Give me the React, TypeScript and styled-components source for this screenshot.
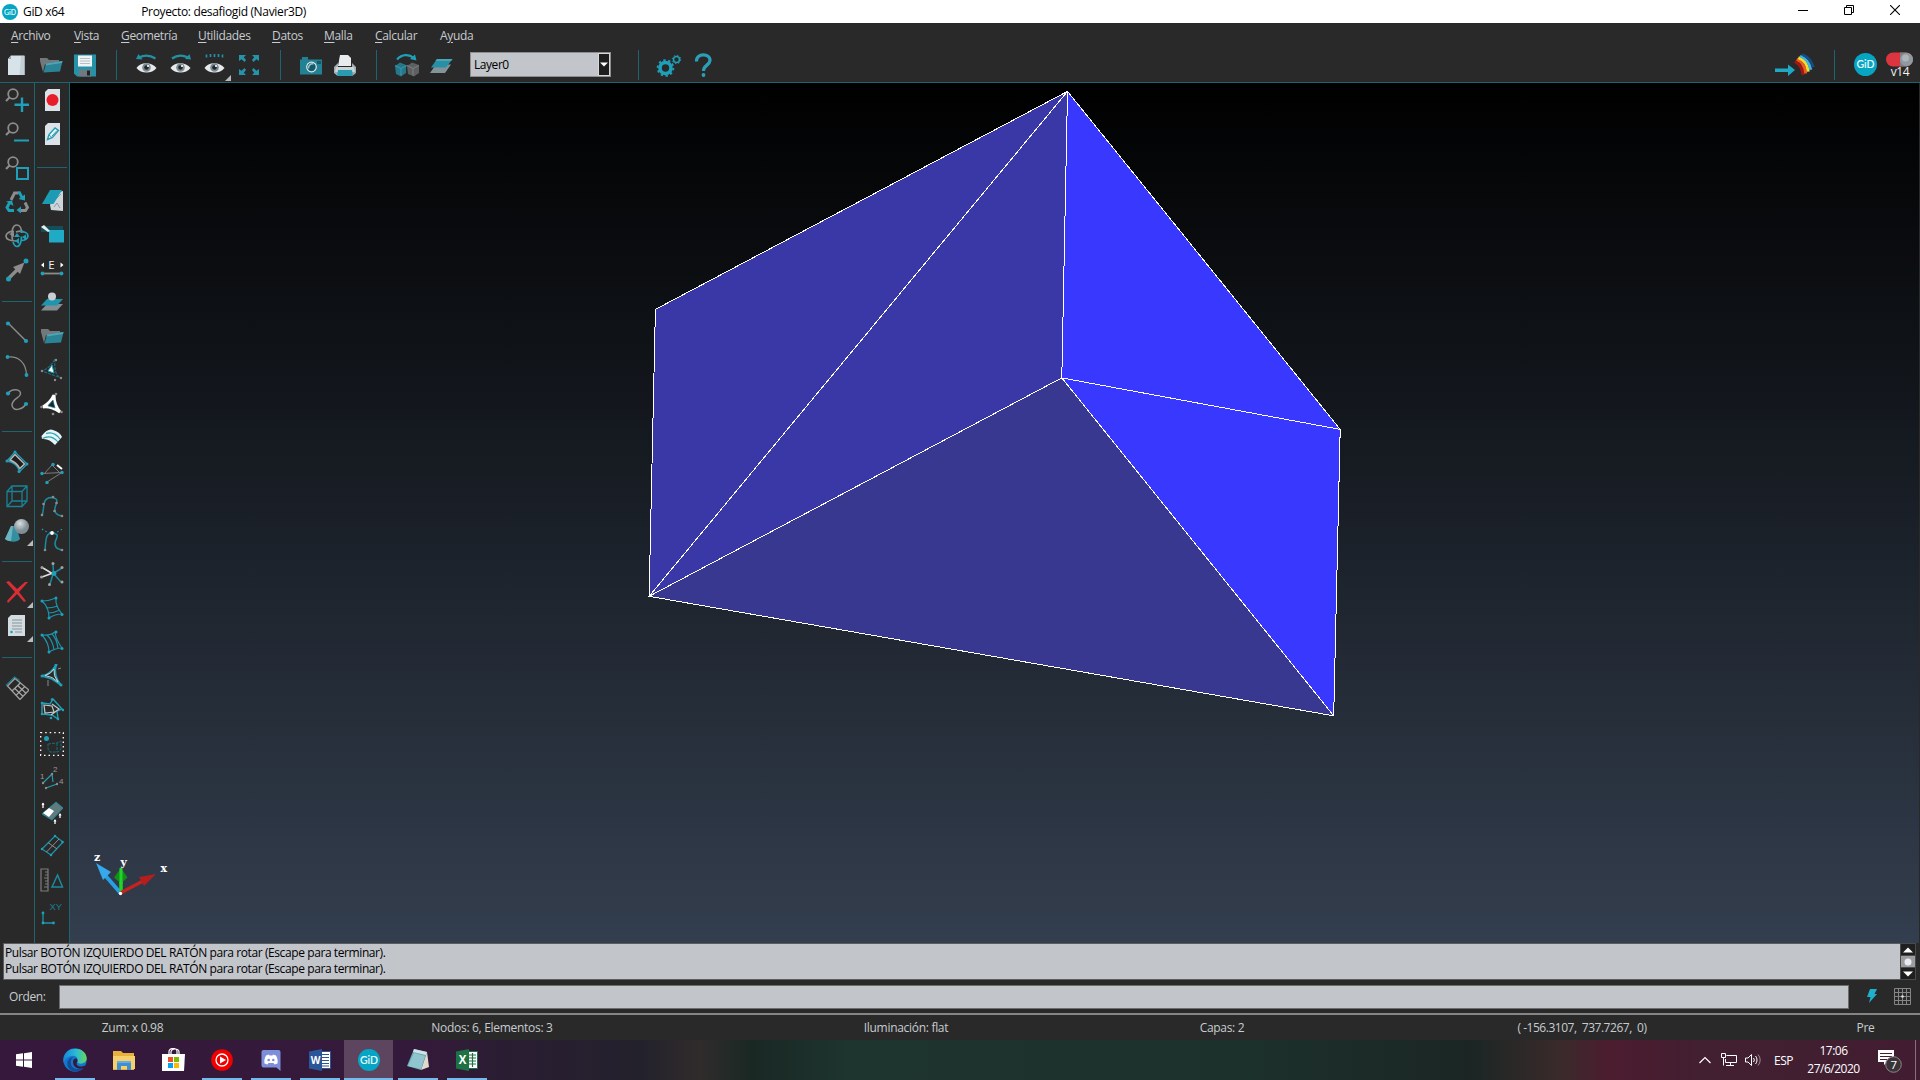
import React from 'react';
import styled, { createGlobalStyle } from 'styled-components';

const TEAL = '#1fa0ba';
const LINE = '#1d6470';
const GREY = '#8c8c8c';

const GlobalStyle = createGlobalStyle`
  html, body { margin: 0; padding: 0; background: #292929; overflow: hidden; }
  body { font-family: 'Open Sans', 'Noto Sans', sans-serif; font-size: 12px; }
  * { box-sizing: border-box; }
  svg { display: block; flex: none; }
`;

const Shell = styled.div`
  width: 1920px;
  height: 1080px;
  display: flex;
  flex-direction: column;
  background: #292929;
  color: #c8ccd0;
`;

/* ---------- title bar ---------- */
const TitleBar = styled.header`
  height: 23px;
  flex: none;
  display: flex;
  align-items: center;
  background: #fff;
  color: #000;
  padding: 0 2px;
`;
const Title = styled.span<{ $left: number }>`
  margin-left: ${(p) => p.$left}px;
  letter-spacing: -0.34px;
  white-space: pre;
`;
const WindowButtons = styled.div`
  margin-left: auto;
  display: flex;
  height: 100%;
  padding-bottom: 3px;
`;
const WindowButton = styled.div`
  width: 46px;
  display: flex;
  align-items: center;
  justify-content: center;
`;

/* ---------- menu ---------- */
const MenuBar = styled.nav`
  height: 24px;
  flex: none;
  display: flex;
  align-items: center;
  padding: 1px 0 0 11px;
`;
const MenuItem = styled.span<{ $w: number }>`
  width: ${(p) => p.$w}px;
  letter-spacing: -0.34px;
  u { text-underline-offset: 2px; }
`;

/* ---------- toolbar ---------- */
const Toolbar = styled.div`
  height: 36px;
  flex: none;
  display: flex;
  align-items: center;
  border-bottom: 1px solid ${LINE};
  padding-right: 2px;
`;
const Slot = styled.div<{ $w?: number; $corner?: boolean }>`
  position: relative;
  width: ${(p) => p.$w ?? 34}px;
  height: 34px;
  flex: none;
  display: flex;
  align-items: center;
  justify-content: center;
  &::after {
    content: '';
    display: ${(p) => (p.$corner ? 'block' : 'none')};
    position: absolute;
    right: 1px;
    bottom: 1px;
    border-style: solid;
    border-width: 0 0 6px 6px;
    border-color: transparent transparent #b9bcbf transparent;
  }
`;
const VRule = styled.div<{ $before?: number }>`
  width: 1px;
  height: 30px;
  background: ${LINE};
  margin: 0 13px 0 ${(p) => p.$before ?? 14}px;
`;
const Combo = styled.div`
  width: 141px;
  height: 25px;
  margin-left: 12px;
  display: flex;
  border: 1px solid #8e8e8e;
  background: #c2c5ca;
  color: #000;
`;
const ComboText = styled.div`
  flex: 1;
  padding-left: 3px;
  line-height: 24px;
  letter-spacing: -0.45px;
`;
const ComboArrow = styled.div`
  width: 12px;
  background: #1e1e1e;
  border: 1px solid #d8d8d8;
  display: flex;
  align-items: center;
  justify-content: center;
`;
const Spacer = styled.div`flex: 1;`;
const ToggleStack = styled.div`
  display: flex;
  flex-direction: column;
  align-items: center;
  width: 36px;
  color: #f2f2f2;
  line-height: 9px;
  letter-spacing: -0.4px;
  padding-bottom: 1px;
`;

/* ---------- work area ---------- */
const Work = styled.main`
  height: 860px;
  flex: none;
  display: flex;
`;
const Rail = styled.aside`
  width: 35px;
  flex: none;
  display: flex;
  flex-direction: column;
  border-right: 1px solid ${LINE};
`;
const HRule = styled.div<{ $h?: number }>`
  height: ${(p) => p.$h ?? 28}px;
  flex: none;
  display: flex;
  align-items: center;
  justify-content: center;
  &::before {
    content: '';
    width: 30px;
    height: 1px;
    background: ${LINE};
  }
`;
const Viewport = styled.section`
  width: 1849px;
  background: linear-gradient(#000, #333e4e);
`;

/* ---------- messages and command ---------- */
const MessageRow = styled.div`
  height: 37px;
  flex: none;
  display: flex;
  padding: 0 4px 0 3px;
`;
const Messages = styled.div`
  width: 1897px;
  background: #c2c5ca;
  border: 1px solid #5c5c5c;
  border-right: 0;
  color: #000;
  padding: 1px;
  line-height: 16px;
  letter-spacing: -0.405px;
`;
const ScrollBar = styled.div`
  width: 16px;
  display: flex;
  flex-direction: column;
  background: #4a4a4a;
  padding: 1px;
  gap: 1px;
`;
const ScrollPart = styled.div<{ $thumb?: boolean }>`
  flex: 1;
  display: flex;
  align-items: center;
  justify-content: center;
  background: ${(p) => (p.$thumb ? '#9b9da1' : '#1f1f1f')};
`;
const CommandRow = styled.div`
  height: 33px;
  flex: none;
  display: flex;
  align-items: center;
  padding: 0 9px;
  letter-spacing: -0.4px;
`;
const CommandInput = styled.div`
  width: 1790px;
  height: 24px;
  border: 1px solid #6d6d6d;
  background: #c2c5ca;
`;
const CommandLabel = styled.span`width: 50px;`;
const CommandIcons = styled.div`
  flex: 1;
  display: flex;
  justify-content: space-between;
  padding-left: 17px;
`;
const StatusBar = styled.div`
  height: 27px;
  flex: none;
  display: grid;
  grid-template-columns: 265px 454px 374px 258px 462px 105px;
  align-items: center;
  justify-items: center;
  border-top: 2px solid #858585;
  white-space: pre;
`;
const Status = styled.span<{ $ls?: number }>`
  letter-spacing: ${(p) => p.$ls ?? -0.3}px;
`;

/* ---------- taskbar ---------- */
const Taskbar = styled.footer`
  height: 40px;
  flex: none;
  display: flex;
  color: #fff;
  background: linear-gradient(90deg, #35183c 0, #341a3a 430px, #2a1d33 500px, #23212c 640px, #302c2c 700px, #1a2824 750px,
    #1e342e 850px, #1c302c 1250px, #1b2624 1470px, #3a2a2b 1560px, #4c1c2f 1610px, #421f31 1700px, #421d31 1920px);
`;
const TaskCell = styled.div<{ $active?: boolean; $w?: number }>`
  width: ${(p) => p.$w ?? 49}px;
  display: grid;
  grid-template-rows: 38px 2px;
  align-items: center;
  justify-items: center;
  background: ${(p) => (p.$active ? '#5d4560' : 'transparent')};
  > svg { margin-top: 2px; }
`;
const TaskUnder = styled.div<{ $active?: boolean }>`
  width: ${(p) => (p.$active ? 49 : 40)}px;
  height: 2px;
  background: #76b9ed;
`;
const TaskGap = styled.div`width: 2px;`;
const Tray = styled.div`
  margin-left: auto;
  display: flex;
  align-items: center;
`;
const TrayItem = styled.div<{ $w: number }>`
  width: ${(p) => p.$w}px;
  display: flex;
  justify-content: center;
  letter-spacing: -0.5px;
`;
const Clock = styled.div`
  width: 63px;
  text-align: center;
  line-height: 18px;
  letter-spacing: -0.5px;
`;
const DesktopEdge = styled.div`
  width: 5px;
  height: 40px;
  border-left: 1px solid #85707c;
`;

/* ---------- icons ---------- */
type IconProps = { children: React.ReactNode; w?: number; h?: number };
const Icon = ({ children, w = 24, h = 24 }: IconProps) => (
  <svg width={w} height={h} viewBox={`0 0 ${w} ${h}`} fill="none">{children}</svg>
);

const Dots = ({ at, c = TEAL, r = 1.5 }: { at: number[][]; c?: string; r?: number }) => (
  <>{at.map(([x, y]) => <circle key={`${x}-${y}`} cx={x} cy={y} r={r} fill={c} />)}</>
);

const GidLogo = ({ size, font }: { size: number; font: number }) => (
  <svg width={size} height={size} viewBox={`0 0 ${size} ${size}`}>
    <circle cx={size / 2} cy={size / 2} r={size / 2} fill="#07a5c4" />
    <text x={size / 2} y={size / 2 + font * 0.36} textAnchor="middle" fontSize={font} fontWeight="600" fill="#e8fbff" fontFamily="Lato, 'Open Sans', sans-serif">GiD</text>
  </svg>
);

const Eye = () => (
  <>
    <path d="M1.500 15C5 8.500 17 8.500 21.500 15C17 21 6 21 1.500 15Z" fill="#e6eaec" />
    <circle cx="11.500" cy="14.500" r="4.300" fill="#7d8a92" />
    <circle cx="11.500" cy="14.500" r="2.300" fill="#20282c" />
    <circle cx="13" cy="13" r="1.100" fill="#fff" />
  </>
);

const Magnifier = () => (
  <>
    <circle cx="8" cy="6" r="4.800" stroke={GREY} strokeWidth="1.800" />
    <path d="M4.500 9.500L1 13" stroke={GREY} strokeWidth="2.200" />
  </>
);

const FolderShape = () => (
  <>
    <path d="M1 5h7l2 2h10v4H6l-2 8L1 8z" fill="#74787a" />
    <path d="M7 10.500L23.500 8 21 18.500 4.500 19.500z" fill="#2a8496" />
    <path d="M7 10.500L23.500 8 23 10 6.500 12.500z" fill="#4da5b5" />
  </>
);

const NewIcon = () => (
  <Icon><path d="M6 2.500H19.500V22H3V6z" fill="#d8e2e9" /><path d="M6 2.500V6H3z" fill="#93a4ae" /><path d="M16 3h3.500v19h-5z" fill="#c3d0d8" /></Icon>
);
const SaveIcon = () => (
  <Icon>
    <path d="M1 1.500H23V23.500H4L1 20.500z" fill="#2592a8" />
    <path d="M5 2.500h14v11H5z" fill="#eef4f6" /><path d="M7 5.500h10M7 8h10M7 10.500h10" stroke="#b6c0c6" />
    <path d="M6 16.500h12v7H6z" fill="#6e7a80" /><path d="M14 17.500h3v5h-3z" fill="#222" />
  </Icon>
);
const EyeBack = () => (
  <Icon><path d="M4 4.500C9 2 15 2 20.500 5.500" stroke="#2490a4" strokeWidth="2.200" /><path d="M1 6L3.500 1 7.500 6.500z" fill="#2490a4" /><Eye /></Icon>
);
const EyeForward = () => (
  <Icon><path d="M3 5.500C8 2 14 2 19 4.500" stroke="#2490a4" strokeWidth="2.200" /><path d="M22 6.500L20.500 1 16 6z" fill="#2490a4" /><Eye /></Icon>
);
const EyeDots = () => (
  <Icon><path d="M3.500 1.500v3M7.500 1v3M11.500 1v3M15.500 1v3M19.500 1.500v3" stroke="#2490a4" strokeWidth="1.700" /><Eye /></Icon>
);
const ExpandIcon = () => (
  <Icon><g fill="#2593a9">
    <path d="M2 2h7L6.800 4.300 9 7 7.500 9 4.500 6.300 2 8z" /><path d="M22 2h-7l2.200 2.300L15 7l1.500 2 3-2.700L22 8z" />
    <path d="M2 22h7l-2.200-2.300L9 17l-1.500-2-3 2.700L2 16z" /><path d="M22 22h-7l2.200-2.300L15 17l1.500-2 3 2.700L22 16z" />
  </g></Icon>
);
const CameraIcon = () => (
  <Icon>
    <path d="M1 6.500h2V4h6v2.500h14v15H1z" fill="#238194" /><path d="M18 8h4v3h-4z" fill="#135b69" />
    <circle cx="12.500" cy="14" r="5.400" fill="#dfe7ea" /><circle cx="12.500" cy="14" r="4.200" fill="#155a69" /><path d="M9.500 15.500a4 4 0 0 1 5-4.500" stroke="#8fc8d2" strokeWidth="1.500" />
  </Icon>
);
const PrinterIcon = () => (
  <Icon>
    <path d="M7 2h8l3 3v8H5z" fill="#e8ecee" /><path d="M1 14l4-4v4h14v-4l4 4v6l-3 2.500H4L1 20z" fill="#a3adb2" />
    <path d="M3 14h18l1 5H2z" fill="#ccd4d8" /><path d="M5 17h14l1 6H4z" fill="#2a9cb2" />
  </Icon>
);
const CubesIcon = () => (
  <Icon w={26}>
    <path d="M3 6.500C8 1 15 1 20 5" stroke={TEAL} strokeWidth="2.200" /><path d="M22.500 7.500L21 1.500 16 6z" fill={TEAL} />
    <path d="M1 13l5-3.500 6 2.500v8l-5 3.500-5-2.500z" fill="#23788a" /><path d="M1 12.500l6 3 6-3M7 15.500v7" stroke="#4296a6" />
    <path d="M13 13l5-3.500 7 2.500v8l-5 3.500-6-2.500z" fill="#5c6061" /><path d="M13 12.500l6 3 6-3M19 15.500v7" stroke="#7c8082" />
  </Icon>
);
const LayersIcon = () => (
  <Icon><path d="M7 11.500h15l-6 8.500H1z" fill="#84939a" /><path d="M8 6h15.500l-6.500 8.500H2z" fill="#2790a5" /><path d="M8 6h15.500l-1.500 2H6.500z" fill="#4aa6b7" /></Icon>
);
const GearsIcon = () => (
  <Icon w={26}>
    <circle cx="9.500" cy="15" r="5.500" stroke={TEAL} strokeWidth="3.600" />
    <circle cx="9.500" cy="15" r="7.900" stroke={TEAL} strokeWidth="1.800" strokeDasharray="2.400 2.560" />
    <circle cx="20.500" cy="6.500" r="3" stroke={TEAL} strokeWidth="1.500" />
    <circle cx="20.500" cy="6.500" r="4.200" stroke={TEAL} strokeWidth="1" strokeDasharray="1.500 1.800" />
  </Icon>
);
const HelpIcon = () => (
  <Icon><path d="M5.500 8.500C5 -0.500 19.500 0 19 7.500C18.500 12.500 12.500 12 12.500 18" stroke="#2c9fb8" strokeWidth="3.200" /><circle cx="12.500" cy="22" r="1.900" fill="#2c9fb8" /></Icon>
);
const PostprocessIcon = () => (
  <Icon w={40}>
    <path d="M0 15.500h13v-4l7 5.500-7 6v-4H0z" fill="#1eaac6" />
    <g strokeWidth="2.900">
      <path d="M20 8.500L27.500 21.500" stroke="#a61414" strokeWidth="0" />
      <path d="M20 8.500C24.500 11 27.500 15 28 22" stroke="#a61414" />
      <path d="M21.700 6.300C26.500 8.500 30 13.500 30.800 20.500" stroke="#f15a1c" />
      <path d="M23.400 4.600C28.500 6.500 32.500 11.500 33.300 18.700" stroke="#f7dc2d" />
      <path d="M25.200 3C30.500 5 34.500 10 35.800 16.700" stroke="#3fb5e0" />
      <path d="M27.200 1.500C32 3.500 36.500 8 38.300 14.200" stroke="#164b86" />
    </g>
  </Icon>
);

const ZoomIn = () => <Icon><Magnifier /><path d="M17 9.500V24M9.500 16.700H24" stroke={TEAL} strokeWidth="2.400" /></Icon>;
const ZoomOut = () => <Icon><Magnifier /><path d="M9 18.500H24" stroke={TEAL} strokeWidth="2" /></Icon>;
const ZoomFrame = () => <Icon><Magnifier /><rect x="12" y="12" width="11" height="11" stroke={TEAL} strokeWidth="2" /></Icon>;
const Recycle = () => (
  <Icon>
    <g strokeWidth="2.900"><path d="M6 10L9.500 3H13" stroke={GREY} /><path d="M13 2.700h1.500l3 6" stroke={TEAL} /><path d="M20 12.500l2.500 5-2 3h-5" stroke={GREY} /><path d="M9 20.500H4l-2-3L4.500 13" stroke={TEAL} /></g>
    <path d="M13.500 9l6.500 1.500V4.500zM16 16.500v7l-4.500-3.500zM1 11.500l6-1 1.500 5.500z" fill={TEAL} />
  </Icon>
);
const Orbit = () => (
  <Icon><g strokeWidth="1.700">
    <path d="M7.500 16C6 6 8 1 12 1c3 0 4.500 4 4.500 8" stroke={GREY} /><path d="M11 17C4 17 1 15 1 12s4-5 8-4.500M19 8c-2-1-5-1-8 0" stroke={GREY} />
    <path d="M8 18c1 3 2.500 4.500 4 4.500 3 0 4.500-5 4.500-10M15 7.500c5 0 8 2 8 4.500s-3 4.500-7 4.500" stroke={TEAL} />
  </g><path d="M9 13h6l-3-4zM14 14v6l-4-3zM17 13l4-2.500V16z" fill={TEAL} /><path d="M4 10l5-2v5z" fill={GREY} /></Icon>
);
const MoveArrow = () => (
  <Icon><path d="M4 20L13 11" stroke={GREY} strokeWidth="3.400" /><path d="M8 9L19.500 4.500 15 16z" fill={GREY} /><Dots at={[[3.500, 21], [21, 3]]} r={2.500} /></Icon>
);
const LineIcon = () => <Icon><path d="M3 3L21 21" stroke={GREY} strokeWidth="1.500" /><Dots at={[[3, 3.500], [21, 21]]} r={2.100} /></Icon>;
const ArcIcon = () => <Icon><path d="M3 3C14 2 21 9 21.500 21" stroke={GREY} strokeWidth="1.200" /><Dots at={[[2.500, 3], [21.500, 21]]} r={1.900} /></Icon>;
const CurveIcon = () => (
  <Icon><path d="M3 5.500C7 0 16 1 15.500 6C15 10 7 11 7 17C7.500 24 17 22 21 16" stroke={GREY} strokeWidth="1.500" /><Dots at={[[3, 5.500], [21, 16]]} r={2.100} /></Icon>
);
const SurfaceIcon = () => (
  <Icon><path d="M10 2L22 14 14.500 21.500C13 15 8 12 2 11z" fill="#231c1c" stroke={TEAL} strokeWidth="1.400" /><path d="M10 4.500L19.500 14 14.800 18.500C12.500 14 9 11.500 5 10z" stroke="#c0b9b9" strokeWidth="1.400" /><Dots at={[[10, 2], [22, 14], [14, 21.500], [2, 11]]} /></Icon>
);
const BoxIcon = () => <Icon><path d="M2 7.500h15v15H2zM7 2h15v15H7zM2 7.500L7 2M17 7.500L22 2M2 22.500L7 17M17 22.500l5-5.500" stroke="#1b8196" strokeWidth="1.300" /></Icon>;
const VolumeIcon = () => (
  <Icon><defs><radialGradient id="ball" cx=".4" cy=".3"><stop stopColor="#d9dfe1" /><stop offset="1" stopColor="#7f8f96" /></radialGradient></defs>
    <path d="M6 8l5 0 4 13c-3 4-11 3-15 0z" fill="#348fa2" /><path d="M6 8l2 0-2 15c-3 0-5-1-6-2z" fill="#6db4c1" /><circle cx="16.500" cy="8.500" r="7.500" fill="url(#ball)" /></Icon>
);
const DeleteIcon = () => <Icon><path d="M1 2l3-1 8 8 8-7h3L14 12l7 9-2 1-7-8-9 9-1-2 8-9z" fill="#db2d36" /></Icon>;
const ListIcon = () => (
  <Icon><path d="M6 1h14v21H3V4z" fill="#d3dce1" /><path d="M7 6h10M7 9h10M7 12h10M7 15h10M10 18h7" stroke="#8a959b" /><circle cx="6.500" cy="18" r="1.300" fill={TEAL} /></Icon>
);
const MeshIcon = () => (
  <Icon>
    <path d="M10 2.500L24 14 15 23.500 2.500 10z" stroke="#a0a0a0" strokeWidth="1.300" />
    <path d="M1 9.500L9.500 1l5 3.500" stroke="#1b8196" strokeWidth="1.200" />
    <path d="M15.600 6.700L7 15M19.800 10.500L11 19.300M12.700 9.500L21 17.200M9.800 12.500L18 20.300" stroke="#a8a8a8" strokeWidth="1.200" />
  </Icon>
);

const Paper = () => <path d="M8 1h12v22H5V4z" fill="#dbe3e8" />;
const RecordIcon = () => <Icon><Paper /><circle cx="12.500" cy="12" r="6" fill="#e71d2b" /></Icon>;
const PencilIcon = () => <Icon><Paper /><path d="M7.500 17.500l1.500-5 6-6.500 3.500 2.500-6 7z" fill="#e9f6f9" stroke="#2a9ab0" strokeWidth="1.400" /><path d="M9 13l3 2.500M12 14l5-5.500" stroke="#2a9ab0" /></Icon>;
const BookIcon = () => <Icon><path d="M15 5l8-2v20l-12-1-1-5z" fill="#cbd5da" /><path d="M14 19l3-4 3 5M15 12l6-6" stroke="#8f9da4" /><path d="M10 2h12l-8.500 14H2z" fill="#1c9bb5" /></Icon>;
const ViewIcon = () => <Icon><path d="M1 4h22v6H1z" fill="#144e58" /><path d="M9 8h15v12.500H9z" fill="#1faac6" /><path d="M1 5l3-2 6 6-2 1z" fill="#e8eef0" /></Icon>;
const EdgeIcon = () => (
  <Icon><path d="M1 9l3-2.500v5zM23.500 9l-3-2.500v5z" fill="#fff" /><text x="11.500" y="13" fontSize="11.500" textAnchor="middle" fill="#f2f2f2" fontFamily="'Open Sans', sans-serif">E</text><path d="M3 17.500H21" stroke={GREY} strokeWidth="1.800" /><Dots at={[[2.500, 17.500], [21.500, 17.500]]} r={1.900} /></Icon>
);
const LayerBall = () => <Icon><path d="M7 14h16l-6 6.500H1z" fill="#848e92" /><path d="M7 9h16l-6 6.500H1z" fill="#1f96ae" /><circle cx="12" cy="6.500" r="4" fill="#c8ced1" /></Icon>;
const TriSmall = () => <Icon><path d="M15 1C14 12 16 18 21 20L2 13Q10 10 15 1z" stroke="#1b6b7a" strokeWidth="1.200" strokeDasharray="3 1" /><path d="M12 7l2 8-6-2z" fill="#fff" stroke={TEAL} /><Dots at={[[16, 2], [21, 20], [15, 22], [2, 13]]} c={GREY} r={1.200} /></Icon>;
const TriBig = () => <Icon><path d="M14 3Q14 13 20 20Q11 14 3 15Q11 10 14 3z" stroke="#fff" strokeWidth="3" /><path d="M13 8l2 8-7-2z" fill="#252525" stroke={TEAL} strokeWidth=".6" /><Dots at={[[16, 2], [21.500, 20], [1.500, 15], [13, 22]]} c={GREY} r={1.300} /></Icon>;
const WhiteSurface = () => <Icon><path d="M1.500 10Q8 2 13 4Q20 6 22 11L15 19Q9 12 2 13z" fill="#e4f5f7" /><path d="M2.500 12.500Q11 8 18 16M6 7.500Q14 5 20 13" stroke="#2f9db1" strokeWidth="1.100" /></Icon>;
const TrimLine = () => <Icon><path d="M2 13.500L22 12.500 7 22M12 5l-8 9M12 5l8 8" stroke="#7c7c7c" strokeWidth="1" /><path d="M17 5l5 4" stroke="#fff" strokeWidth="2" /><Dots at={[[2, 13.500], [13, 4.500], [22, 12.500], [7, 22.500]]} r={1.700} /></Icon>;
const CurveDots = () => <Icon><path d="M2 21C5 16 1 4 11 3.500C19 4 17 8 15.500 12C13.500 18 16 21 22 22" stroke="#1b8a9f" strokeWidth="1.500" /><Dots at={[[2, 21], [3.500, 10], [13, 3], [16.500, 9], [14.500, 17], [22, 22]]} c={GREY} r={1.300} /></Icon>;
const CurveTangent = () => <Icon><path d="M5 22C6 14 5 5 12 5C20 6 17 9 15.500 13C14 18 16 21 22 22" stroke="#1b8a9f" strokeWidth="1.500" /><path d="M2 1C8 6 17 6 22 1" stroke={TEAL} strokeWidth="1.200" strokeDasharray="1.500 2.500" /><circle cx="12" cy="5" r="1.900" fill="#fff" /><Dots at={[[5, 22], [22, 22]]} c={GREY} r={1.300} /></Icon>;
const StarIcon = () => <Icon><path d="M13.500 11.500L13 2M14 11l8-5M14 12l7 8M13 12l-3 10" stroke="#1b8a9f" strokeWidth="1.500" /><path d="M3 6l10 6M2 15l11-4" stroke="#e0e0e0" strokeWidth="1.500" /><circle cx="14" cy="11.500" r="2.400" fill={TEAL} /><Dots at={[[13, 1.500], [2, 5.500], [22, 5.500], [1.500, 15], [22, 20], [9.500, 22.500]]} c="#a2a2a2" /></Icon>;
const GridSurf = ({ wavy = false }: { wavy?: boolean }) => (
  <Icon><path d={wavy ? 'M2 5Q10 6 15 2Q16 10 22 18Q16 18 9 22Q9 13 2 5M7 5Q13 11 14 20M12 4Q17 9 18 19' : 'M2 5Q9 5 16 2Q15 10 22 18Q15 18 9 22Q9 11 2 5M6 12Q12 12 18 10M8 17Q14 17 20 14'} stroke="#1b93aa" strokeWidth="1.200" /><Dots at={[[2, 5], [16, 2], [22, 18.500], [9, 22]]} /></Icon>
);
const SurfCut = () => <Icon><path d="M16 1Q13 12 21 21L12 15 2 12Q10 11 16 1z" stroke={TEAL} strokeWidth="1.800" /><path d="M14 5Q13 12 18 18L12 13.500 5 11.500Q11 10 14 5z" stroke="#c9d2d4" /><path d="M8 22v-6M18 5l3-1" stroke={GREY} /><Dots at={[[16, 1], [21, 21], [2, 12]]} /></Icon>;
const SurfJoin = () => <Icon><path d="M2 5l8 1 3-5 9 10-5 2 1 8-6-4-10-1z" stroke={TEAL} strokeWidth="1.400" /><path d="M4 7l8 1 2 6-9 1zM12 6l7 5-8 6" stroke="#c0cacc" strokeWidth="1.200" /><Dots at={[[2, 5], [12, 1.500], [23, 12], [18, 21], [2, 16], [11, 20]]} r={1.300} /></Icon>;
const SelectIcon = () => <Icon><rect x=".7" y=".7" width="22.600" height="22.600" stroke="#fff" strokeWidth="1.300" strokeDasharray="1.500 3" /><circle cx="6.500" cy="6.500" r="2.500" fill={TEAL} /><path d="M8 12l9-1 4-2v8l-3 3H10l-2-3zM17 11v9" stroke="#166c7c" strokeDasharray="3 1" /></Icon>;
const NumberIcon = () => <Icon><path d="M3 17L12 8l1 8M6 22l11-4" stroke={TEAL} strokeWidth="1.200" /><Dots at={[[3, 17], [6, 22], [12, 8], [17, 18]]} c={GREY} r={1.200} /><g fill="#999" fontSize="8" fontFamily="Liberation Sans"><text x="0" y="13">1</text><text x="13" y="6">2</text><text x="19" y="18">4</text></g></Icon>;
const NormalIcon = () => <Icon><path d="M16 2l7 6-11 12-10-6z" fill="#627a7e" stroke="#1b8a9f" /><path d="M9 8l5 3-5 6-6-4z" fill="#fff" /><path d="M3 8V3M20 18v-4M15 24v-4" stroke="#fff" strokeWidth="1.300" /><path d="M1.500 5L3 2.500 4.500 5zM18.500 15.500L20 13l1.500 2.500zM13.500 21.500L15 19l1.500 2.500z" fill="#fff" /></Icon>;
const QuadIcon = () => <Icon><path d="M15 2l8 6-12 13-9-6z" stroke="#1b93aa" strokeWidth="1.300" /><path d="M19 5L6.500 18M8 8.500l9 6.500" stroke={GREY} /><Dots at={[[15, 2], [22.500, 8], [11, 21], [2, 15]]} r={1.200} /></Icon>;
const MeasureIcon = () => <Icon><path d="M1 1h7v22H1zM5 4h3M5 7h3M4 10h4M5 13h3M5 16h3M4 19h4" stroke="#7d7d7d" strokeWidth="1.200" /><path d="M17.500 7l5 12H12z" stroke="#1b8a9f" strokeWidth="1.500" /></Icon>;
const AxesIcon = () => <Icon><path d="M3 11v10h11" stroke="#1b93aa" strokeWidth="1.300" /><Dots at={[[3, 11], [3, 21], [13.500, 21]]} r={1.400} /><text x="9.500" y="7.500" fontSize="9.500" fill="#1c7c90" fontFamily="Liberation Sans">XY</text></Icon>;

/* ---------- model ---------- */
type Pt = [number, number];
const top: Pt = [997.5, 8.4];
const mid: Pt = [991.8, 294.9];
const right: Pt = [1270.2, 346.4];
const low: Pt = [1263.7, 632.8];
const left: Pt = [579.1, 513.3];
const upLeft: Pt = [585.4, 226.4];
const pts = (...p: Pt[]) => p.map((q) => q.join(',')).join(' ');

const Model = () => (
  <svg width="1849" height="860" viewBox="0 0 1849 860" fontFamily="'DejaVu Serif', serif">
    <g shapeRendering="crispEdges">
      <polygon points={pts(upLeft, top, mid, left)} fill="#3938a6" />
      <polygon points={pts(left, mid, low)} fill="#393890" />
      <polygon points={pts(top, right, low, mid)} fill="#3838ff" />
      <g stroke="#fff" fill="none" strokeWidth="1">
        <polyline points={pts(left, upLeft, top, right, low, left, top, mid, left)} />
        <polyline points={pts(right, mid, low)} />
      </g>
    </g>
    <path d="M50.500 810L34 791" stroke="#289fe4" strokeWidth="4" />
    <path d="M26 780L41 789 33 797z" fill="#36a8eb" />
    <path d="M51 808V794" stroke="#1fd527" strokeWidth="3.500" />
    <path d="M51 785l6.500 9.500-6.500 6-7-6z" fill="#129018" /><path d="M51 785v16" stroke="#24d42c" strokeWidth="3" />
    <path d="M50.500 810L73 798" stroke="#c62222" strokeWidth="3.200" />
    <path d="M86 791L69 794 74 803z" fill="#b51e1e" />
    <circle cx="50.500" cy="810.500" r="1.700" fill="#fff" />
    <g fill="#fff" fontWeight="bold" fontSize="11"><text x="24" y="777.500">z</text><text x="50.500" y="783">y</text><text x="90.500" y="789">x</text></g>
  </svg>
);

const menu: [string, string, string, number][] = [
  ['', 'A', 'rchivo', 63], ['', 'V', 'ista', 47], ['', 'G', 'eometría', 77], ['', 'U', 'tilidades', 74],
  ['', 'D', 'atos', 52], ['', 'M', 'alla', 51], ['', 'C', 'alcular', 65], ['A', 'y', 'uda', 60],
];

const leftRail = [[ZoomIn, ZoomOut, ZoomFrame, Recycle, Orbit, MoveArrow], [LineIcon, ArcIcon, CurveIcon], [SurfaceIcon, BoxIcon, VolumeIcon], [DeleteIcon, ListIcon], [MeshIcon]];
const withMenu: React.ComponentType[] = [VolumeIcon, DeleteIcon, ListIcon];
const Folder = () => <Icon><FolderShape /></Icon>;
const WavySurf = () => <GridSurf wavy />;
const rightRail: React.ComponentType[] = [BookIcon, ViewIcon, EdgeIcon, LayerBall, Folder, TriSmall, TriBig, WhiteSurface, TrimLine, CurveDots, CurveTangent, StarIcon, GridSurf, WavySurf, SurfCut, SurfJoin, SelectIcon, NumberIcon, NormalIcon, QuadIcon, MeasureIcon, AxesIcon];

/* ---------- taskbar logos ---------- */
const EdgeLogo = () => (
  <Icon><defs><linearGradient id="sea" x2="1"><stop stopColor="#1687d9" /><stop offset=".55" stopColor="#2bbbd5" /><stop offset="1" stopColor="#65d857" /></linearGradient></defs>
    <circle cx="12" cy="12" r="11.700" fill="#1674ca" /><path d="M.5 11C2-3 23-2 23.700 10C24 16 16 17 14 14C16 11 13 7 9 8C5 8 2 11 .5 15z" fill="url(#sea)" />
    <path d="M8.500 11C6 18 11 24 21 19.500C17 25 8 25 5 19C3 13 6 10 10 9z" fill="#104e9a" /><path d="M14 14.500C12 18 18 20 23 17L21 20C15 22 10 19 10 14C10 11 12 10 13.500 10.500C15 12 14.500 13.500 14 14.500z" fill="#351a3b" /></Icon>
);
const ExplorerLogo = () => <Icon><path d="M1 3h8l2 2h11v17H1z" fill="#e9b13c" /><path d="M1 8h22v13H1z" fill="#f6d06a" /><path d="M5 22v-9h14v9h-4v-4H9v4z" fill="#3f8fd1" /><path d="M5 13h14v2H5z" fill="#62aee5" /></Icon>;
const StoreLogo = () => <Icon><path d="M8 7V3.500C8-.5 16-.5 16 3.500V7M10 6V4c0-4 8-4 8 0v2" stroke="#fff" strokeWidth="1.200" /><path d="M1 6h23l-1 17H1z" fill="#fff" /><path d="M7 9h5v5H7z" fill="#f25022" /><path d="M13 9h5v5h-5z" fill="#7fba00" /><path d="M7 15h5v5H7z" fill="#00a4ef" /><path d="M13 15h5v5h-5z" fill="#ffb900" /></Icon>;
const MusicLogo = () => <Icon><circle cx="12" cy="12" r="10.800" fill="#f10000" /><circle cx="12" cy="12" r="6" stroke="#fff" strokeWidth="1.300" /><path d="M10 8.500l6 3.500-6 3.500z" fill="#fff" /></Icon>;
const DiscordLogo = () => <Icon><path d="M4.500 2h15a2 2 0 0 1 2 2v19l-4-3.500h-13a2 2 0 0 1-2-2V4a2 2 0 0 1 2-2z" fill="#7c8fd8" /><path d="M7 7.500l3-1 .5 1h3l.5-1 3 1c1.500 3 2 5 1.500 8l-3 1-1-1.500h-5l-1 1.500-3-1c-.5-3 0-5 1.500-8z" fill="#fff" /><Dots at={[[9.700, 12], [14.300, 12]]} c="#7c8fd8" r={1.300} /></Icon>;
const OfficeLogo = ({ letter, color, grid }: { letter: string; color: string; grid?: boolean }) => (
  <Icon><path d="M12 3.500h10.500v17H12z" fill="#fff" stroke={color} /><path d={grid ? 'M13 7h8M13 10h8M13 13h8M13 16h8M17.500 5v14' : 'M13 6.500h8M13 9.500h8M13 12.500h8M13 15.500h8M13 18h8'} stroke={color} strokeWidth="1.200" /><path d="M1 3.500L14 1v22L1 20.500z" fill={color} /><text x="7.500" y="16" fontSize={grid ? 11.500 : 10} fontWeight="bold" textAnchor="middle" fill="#fff" fontFamily="Open Sans">{letter}</text></Icon>
);
const NotepadLogo = () => <Icon><path d="M8 1l13 3-6 18L1 18z" fill="#6eabb7" /><path d="M8 1l13 3-1 3-13-3z" fill="#cfe3e6" /><path d="M21 4l2 15-8 3z" fill="#dedbcd" /><path d="M8 5l11 3-4 13-13-3z" fill="#8fc5ce" /></Icon>;

const Scroller = ({ up }: { up?: boolean }) => <Icon w={10} h={6}><path d={up ? 'M0 5.500L5 .5l5 5z' : 'M0 .5h10l-5 5z'} fill="#fff" /></Icon>;

export default function App() {
  return (
    <Shell>
      <GlobalStyle />
      <TitleBar>
        <GidLogo size={16} font={7} />
        <Title $left={5}>GiD x64</Title>
        <Title $left={77}>Proyecto: desafiogid (Navier3D)</Title>
        <WindowButtons>
          <WindowButton><Icon w={10} h={10}><path d="M0 5.500h10" stroke="#000" /></Icon></WindowButton>
          <WindowButton><Icon w={10} h={10}><path d="M.5 2.500h7v7h-7zM2.500 2V.5h7v7H8" stroke="#000" /></Icon></WindowButton>
          <WindowButton><Icon w={10} h={10}><path d="M0 0l10 10M10 0L0 10" stroke="#000" strokeWidth="1.100" /></Icon></WindowButton>
        </WindowButtons>
      </TitleBar>

      <MenuBar>
        {menu.map(([a, b, c, w]) => <MenuItem key={b + c} $w={w}>{a}<u>{b}</u>{c}</MenuItem>)}
      </MenuBar>

      <Toolbar>
        <Slot><NewIcon /></Slot><Slot><Folder /></Slot><Slot><SaveIcon /></Slot>
        <VRule />
        <Slot><EyeBack /></Slot><Slot><EyeForward /></Slot><Slot $corner><EyeDots /></Slot><Slot><ExpandIcon /></Slot>
        <VRule />
        <Slot><CameraIcon /></Slot><Slot><PrinterIcon /></Slot>
        <VRule />
        <Slot><CubesIcon /></Slot><Slot><LayersIcon /></Slot>
        <Combo>
          <ComboText>Layer0</ComboText>
          <ComboArrow><Icon w={8} h={5}><path d="M0 .5h8l-4 4z" fill="#fff" /></Icon></ComboArrow>
        </Combo>
        <VRule $before={27} />
        <Slot><GearsIcon /></Slot><Slot><HelpIcon /></Slot>
        <Spacer />
        <Slot $w={46}><PostprocessIcon /></Slot>
        <VRule $before={16} />
        <Slot><GidLogo size={23} font={10.5} /></Slot>
        <ToggleStack>
          <Icon w={28} h={15}>
            <rect x="0" y=".5" width="27" height="14" rx="7" fill="#dd3540" />
            <path d="M14 .5h6a7 7 0 0 1 0 14h-6z" fill="#7b8286" />
            <circle cx="20.500" cy="7.500" r="6.500" fill="#909aa0" /><circle cx="19.500" cy="6" r="3.500" fill="#adb5b9" />
          </Icon>
          v14
        </ToggleStack>
      </Toolbar>

      <Work>
        <Rail>
          {leftRail.map((group, i) => (
            <React.Fragment key={i}>
              {i > 0 && <HRule />}
              {group.map((G, j) => <Slot key={j} $corner={withMenu.includes(G)}><G /></Slot>)}
            </React.Fragment>
          ))}
        </Rail>
        <Rail>
          <Slot><RecordIcon /></Slot><Slot><PencilIcon /></Slot>
          <HRule $h={32} />
          {rightRail.map((G, i) => <Slot key={i}><G /></Slot>)}
        </Rail>
        <Viewport><Model /></Viewport>
      </Work>

      <MessageRow>
        <Messages>
          <div>Pulsar BOTÓN IZQUIERDO DEL RATÓN para rotar (Escape para terminar).</div>
          <div>Pulsar BOTÓN IZQUIERDO DEL RATÓN para rotar (Escape para terminar).</div>
        </Messages>
        <ScrollBar>
          <ScrollPart><Scroller up /></ScrollPart>
          <ScrollPart $thumb><Icon w={8} h={8}><circle cx="4" cy="4" r="3.500" fill="#e9ebf0" /></Icon></ScrollPart>
          <ScrollPart><Scroller /></ScrollPart>
        </ScrollBar>
      </MessageRow>
      <CommandRow>
        <CommandLabel>Orden:</CommandLabel>
        <CommandInput />
        <CommandIcons>
          <Icon w={12} h={16}><path d="M4 1h7L8.500 6H11L3 15l1.500-6H1z" fill="#1fb0cc" /></Icon>
          <Icon w={17} h={17}><path d="M.5 .5h16v16H.5zM4.500 0v17M8.500 0v17M12.500 0v17M0 4.500h17M0 8.500h17M0 12.500h17" stroke="#858585" /><circle cx="8.500" cy="8.500" r="1.300" fill="#ddd" /></Icon>
        </CommandIcons>
      </CommandRow>
      <StatusBar>
        <Status>Zum: x 0.98</Status>
        <Status>Nodos: 6, Elementos: 3</Status>
        <Status>Iluminación: flat</Status>
        <Status>Capas: 2</Status>
        <Status $ls={-0.48}>{'( -156.3107,  737.7267,  0)'}</Status>
        <Status>Pre</Status>
      </StatusBar>

      <Taskbar>
        <TaskCell $w={48}><Icon><path d="M4 6.300l7-1V11.500H4zM12 5.200L20 4v7.500h-8zM4 12.500h7v6.200l-7-1zM12 12.500h8V20l-8-1.200z" fill="#fff" /></Icon></TaskCell>
        <TaskGap />
        <TaskCell><EdgeLogo /><TaskUnder /></TaskCell>
        <TaskCell><ExplorerLogo /></TaskCell>
        <TaskCell><StoreLogo /></TaskCell>
        <TaskCell><MusicLogo /><TaskUnder /></TaskCell>
        <TaskCell><DiscordLogo /><TaskUnder /></TaskCell>
        <TaskCell><OfficeLogo letter="W" color="#2a5699" /><TaskUnder /></TaskCell>
        <TaskCell $active><GidLogo size={22} font={10.5} /><TaskUnder $active /></TaskCell>
        <TaskCell><NotepadLogo /><TaskUnder /></TaskCell>
        <TaskCell><OfficeLogo letter="X" color="#1e7145" grid /><TaskUnder /></TaskCell>
        <Tray>
          <TrayItem $w={24}><Icon w={12} h={8}><path d="M.5 7L6 1.500 11.500 7" stroke="#fff" strokeWidth="1.200" /></Icon></TrayItem>
          <TrayItem $w={24}><Icon w={16} h={16}><path d="M5.500 3.500h10v7h-11V7M.5 1.500h4v4h-4zM2.500 5.500v8M9.500 10.500v3M5 13.500h8" stroke="#fff" /></Icon></TrayItem>
          <TrayItem $w={24}><Icon w={17} h={14}><path d="M.5 5h2.500L6.500 1.500v11L3 9H.5zM8.500 5a3 3 0 0 1 0 4M10.500 3a6 6 0 0 1 0 8" stroke="#fff" /><path d="M13 1.500a8 8 0 0 1 0 11" stroke="#a08a98" /></Icon></TrayItem>
          <TrayItem $w={37}>ESP</TrayItem>
          <Clock>17:06<br />27/6/2020</Clock>
          <TrayItem $w={50}>
            <Icon w={28} h={26}>
              <path d="M2 3h16v12h-7l-3 3v-3H2z" fill="#fff" /><path d="M4 6.500h12M4 9.500h12M4 12.500h7" stroke="#421d31" />
              <circle cx="17.500" cy="17.500" r="7.800" fill="#3a3338" stroke="#8d868b" /><text x="17.500" y="21.500" fontSize="11.500" textAnchor="middle" fill="#fff" fontFamily="Open Sans">7</text>
            </Icon>
          </TrayItem>
          <DesktopEdge />
        </Tray>
      </Taskbar>
    </Shell>
  );
}
